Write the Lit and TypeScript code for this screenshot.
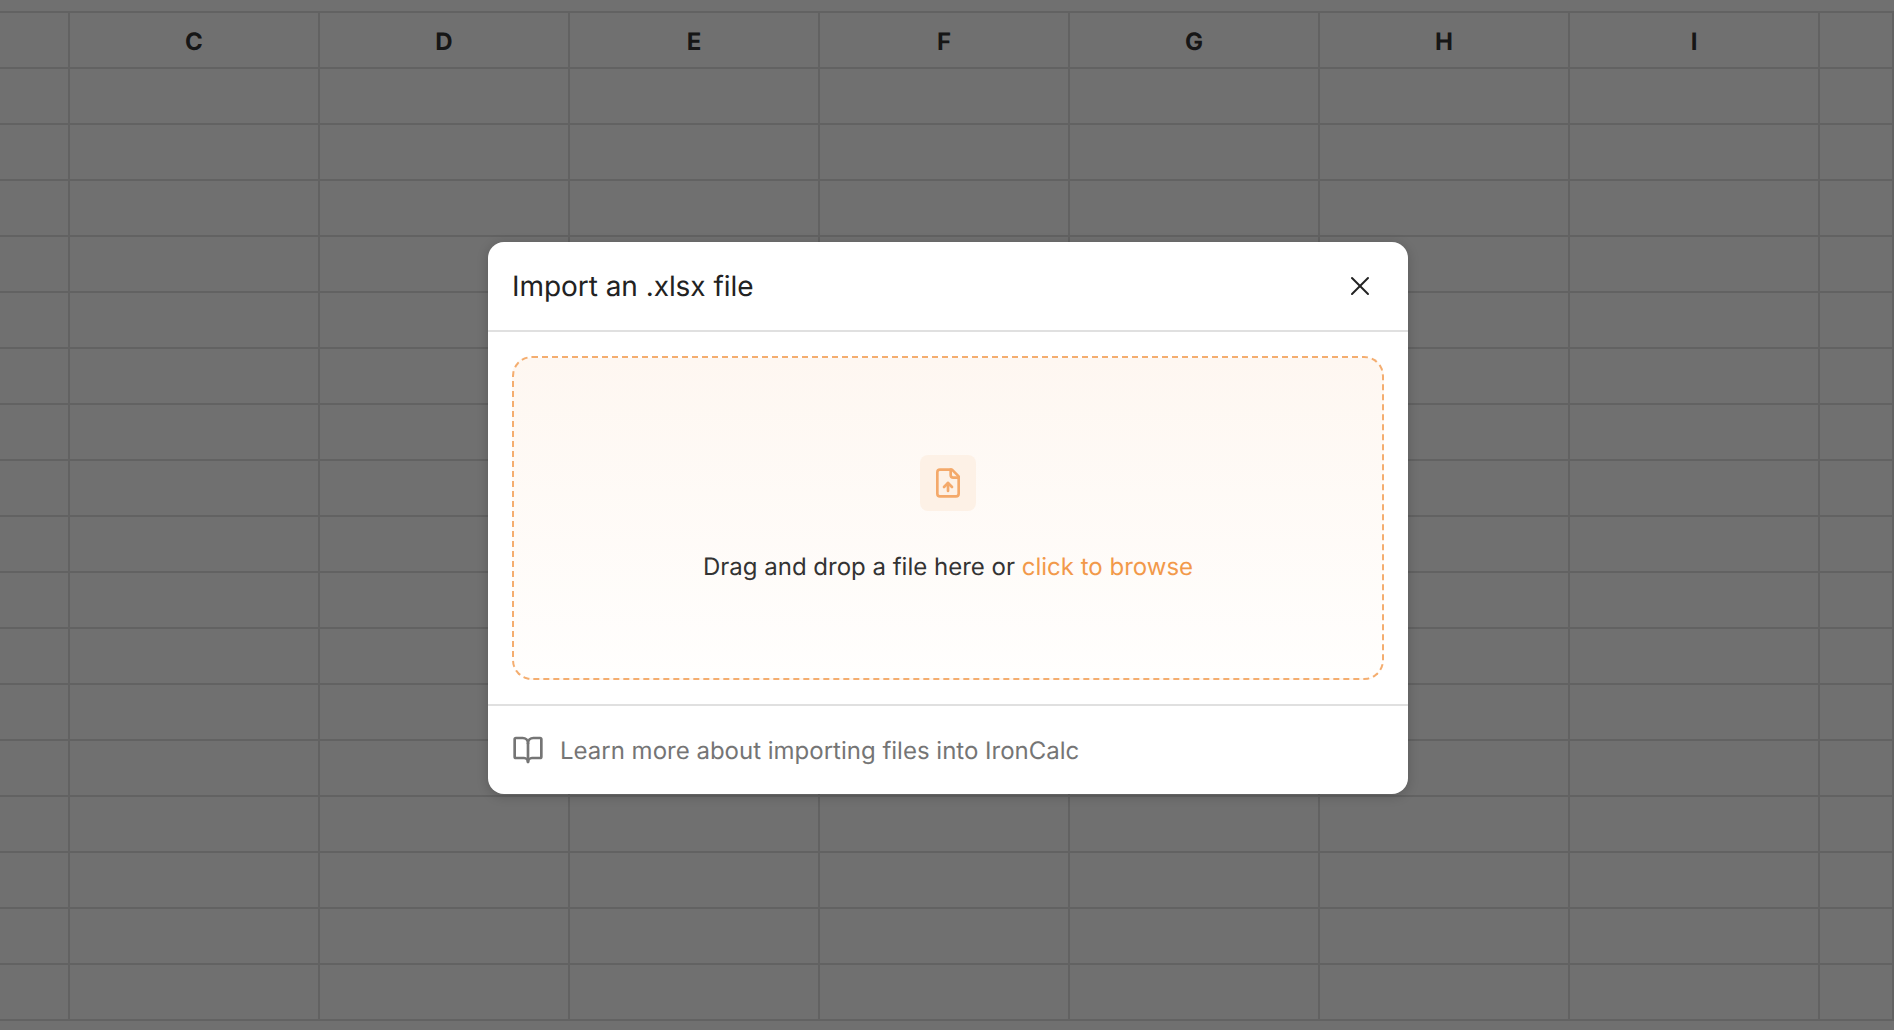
import { LitElement, html, css, svg } from "lit";
import { customElement } from "lit/decorators.js";

const COLS = ["", "C", "D", "E", "F", "G", "H", "I", ""];
const ROWS = 18;

@customElement("app-root")
export class AppRoot extends LitElement {
  static styles = css`
    :host {
      display: block;
      position: relative;
      width: 1894px;
      height: 1030px;
      overflow: hidden;
      background: #fff;
      font-family: Inter, "Liberation Sans", sans-serif;
      color: #333;
      text-rendering: geometricPrecision;
    }
    .sheet {
      display: grid;
      grid-template-columns: 70px repeat(7, 250px) 74px;
      grid-auto-rows: 56px;
      margin-top: 11px;
      border-top: 2px solid #e0e0e0;
    }
    .cell {
      border-right: 2px solid #e0e0e0;
      border-bottom: 2px solid #e0e0e0;
      box-sizing: border-box;
    }
    .cell.head {
      display: flex;
      align-items: center;
      justify-content: center;
      padding-top: 2px;
      font-size: 24px;
      font-weight: 700;
      color: #333;
    }
    .overlay {
      position: absolute;
      inset: 0;
      background: rgba(0, 0, 0, 0.56);
      padding: 242px 0 0 488px;
      box-sizing: border-box;
    }
    .modal {
      width: 920px;
      height: 552px;
      background: #fff;
      border-radius: 16px;
      box-shadow: 0 2px 12px rgba(0, 0, 0, 0.2);
      display: flex;
      flex-direction: column;
      overflow: hidden;
    }
    .header {
      height: 88px;
      flex: none;
      display: flex;
      align-items: center;
      justify-content: space-between;
      padding: 0 24px;
      border-bottom: 2px solid #e0e0e0;
      box-sizing: content-box;
    }
    .title {
      font-size: 28px;
      font-weight: 400;
      letter-spacing: -0.05px;
      color: #222;
    }
    .close {
      width: 32px;
      height: 32px;
      color: #222;
      display: block;
      margin-right: 8px;
      stroke-width: 1.5;
    }
    .body {
      flex: 1;
      padding: 24px;
      display: flex;
      min-height: 0;
    }
    .drop {
      flex: 1;
      border: 2px dashed #f4ad6f;
      border-radius: 20px;
      background: linear-gradient(180deg, #fef7f1 0%, #fffefd 100%);
      display: flex;
      flex-direction: column;
      align-items: center;
      padding-top: 97px;
      box-sizing: border-box;
    }
    .badge {
      width: 56px;
      height: 56px;
      border-radius: 8px;
      background: #fdf1e6;
      display: flex;
      align-items: center;
      justify-content: center;
      color: #f4a96a;
    }
    .drop-text {
      margin-top: 40px;
      font-size: 24px;
      line-height: 32px;
      color: #333;
    }
    .drop-text span {
      color: #f2994a;
    }
    .footer {
      height: 88px;
      flex: none;
      border-top: 2px solid #e0e0e0;
      display: flex;
      align-items: center;
      gap: 16px;
      padding: 0 24px;
      font-size: 24px;
      color: #757575;
    }
    svg {
      fill: none;
      stroke: currentColor;
      stroke-width: 2;
      stroke-linecap: round;
      stroke-linejoin: round;
      flex: none;
    }
  `;

  render() {
    const cells = [];
    for (let r = 0; r < ROWS; r++) {
      for (const c of COLS) {
        cells.push(html`<div class="cell ${r === 0 ? "head" : ""}">${r === 0 ? c : ""}</div>`);
      }
    }
    return html`
      <div class="sheet">${cells}</div>
      <div class="overlay">
        <div class="modal">
          <div class="header">
            <div class="title">Import an .xlsx file</div>
            <svg class="close" viewBox="0 0 24 24" width="32" height="32">
              ${svg`<path d="M18 6 6 18"/><path d="m6 6 12 12"/>`}
            </svg>
          </div>
          <div class="body">
            <div class="drop">
              <div class="badge">
                <svg viewBox="0 0 24 24" width="32" height="32">
                  ${svg`<path d="M15 2H6a2 2 0 0 0-2 2v16a2 2 0 0 0 2 2h12a2 2 0 0 0 2-2V7Z"/><path d="M14 2v4a2 2 0 0 0 2 2h4"/><path d="M12 12v6"/><path d="m15 15-3-3-3 3"/>`}
                </svg>
              </div>
              <div class="drop-text">Drag and drop a file here or <span>click to browse</span></div>
            </div>
          </div>
          <div class="footer">
            <svg viewBox="0 0 24 24" width="32" height="32">
              ${svg`<path d="M12 7v14"/><path d="M3 18a1 1 0 0 1-1-1V4a1 1 0 0 1 1-1h5a4 4 0 0 1 4 4 4 4 0 0 1 4-4h5a1 1 0 0 1 1 1v13a1 1 0 0 1-1 1h-6a3 3 0 0 0-3 3 3 3 0 0 0-3-3z"/>`}
            </svg>
            <span>Learn more about importing files into IronCalc</span>
          </div>
        </div>
      </div>
    `;
  }
}
